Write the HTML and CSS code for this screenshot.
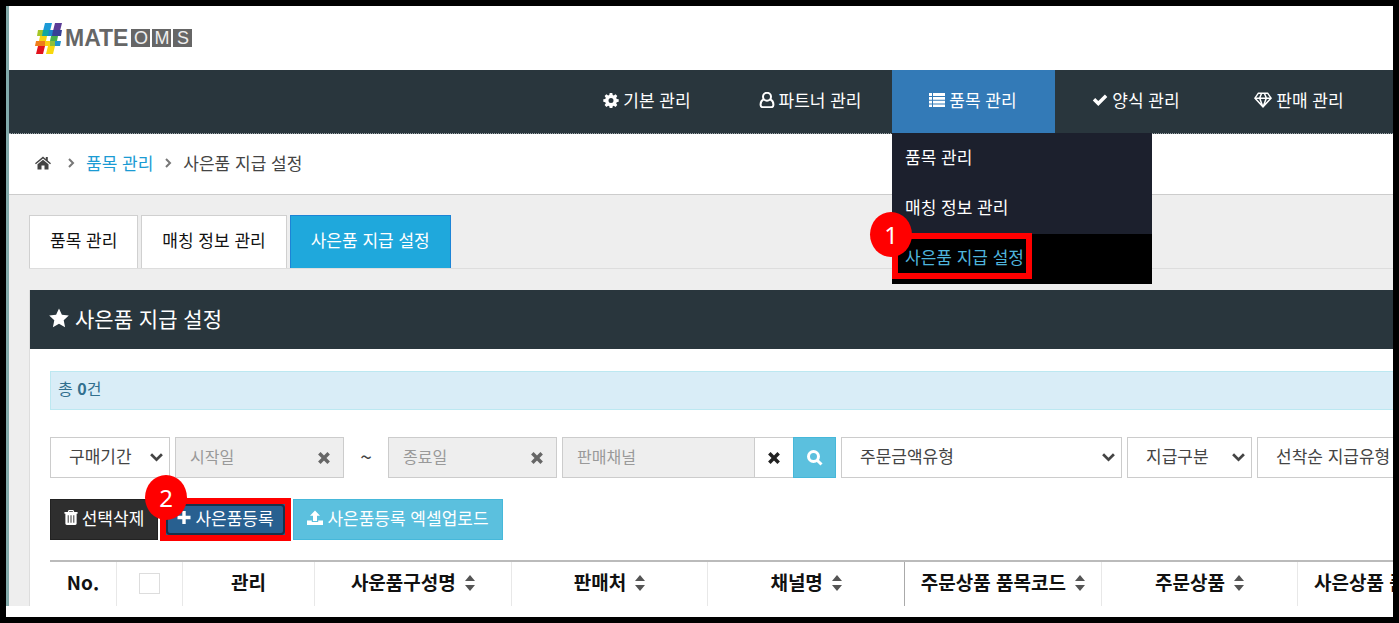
FILE: index.html
```html
<!DOCTYPE html>
<html lang="ko">
<head>
    <meta charset="UTF-8">
    <meta name="viewport" content="width=device-width, initial-scale=1.0">
    <title>사은품 지급 설정</title>
    <link rel="stylesheet" href="styles.css">
</head>
<body>
    <div class="app">
        <header class="header">
            <a class="logo" href="#">
                <svg class="logo-mark" viewBox="0 0 27 31" aria-hidden="true">
                    <path fill="#1c9ad6" d="M10 0h7l-2 8H8z"/>
                    <path fill="#5b3c96" d="M20 0h7l-2 8h-7z"/>
                    <path fill="#a5c626" d="M3 7h6l-1 6H2z"/>
                    <path fill="#12a7a0" d="M8 7h7l-1 6H7z"/>
                    <path fill="#1c84cc" d="M14 7h5l-1 6h-5z"/>
                    <path fill="#363f96" d="M18 7h9l-1 6h-9z"/>
                    <path fill="#f6d411" d="M5 13h7l-1 5H4z"/>
                    <path fill="#49b04b" d="M16 13h7l-1 5h-7z"/>
                    <path fill="#ef7d1a" d="M1 18h10l-1 5H0z"/>
                    <path fill="#f9cf13" d="M10 18h6l-1 5h-5z"/>
                    <path fill="#8dbf3a" d="M15 18h6l-1 5h-5z"/>
                    <path fill="#1d94cf" d="M20 18h6l-1 5h-5z"/>
                    <path fill="#e2121c" d="M3 23h7l-2 8H1z"/>
                    <path fill="#f8d80d" d="M13 23h7l-2 8h-7z"/>
                </svg>
                <span class="logo-text">MATE</span>
                <span class="logo-boxes"><b>O</b><b>M</b><b>S</b></span>
            </a>
        </header>

        <nav class="nav">
            <ul class="nav-list">
                <li class="nav-item">
                    <a href="#">
                        <svg class="icon" viewBox="0 0 16 16" aria-hidden="true"><path fill-rule="evenodd" d="M6.700 1h2.600l.4 2 1.100.5 1.700-1.200 1.800 1.800-1.100 1.700.5 1.100 2 .4v2.500l-2 .4-.5 1.200 1.100 1.700-1.800 1.800-1.700-1.100-1.100.5-.4 2H6.700l-.4-2-1.200-.5-1.700 1.100-1.800-1.800 1.200-1.700-.5-1.200-2-.4V7.300l2-.4.5-1.100L1.600 4.100l1.800-1.800 1.700 1.200L6.300 3zM8 5.900a2.500 2.500 0 1 0 0 5 2.500 2.500 0 0 0 0-5z"/></svg>
                        기본 관리
                    </a>
                </li>
                <li class="nav-item">
                    <a href="#">
                        <svg class="icon line" viewBox="0 0 16 16" aria-hidden="true"><circle cx="8" cy="4.800" r="4"/><path d="M4.700 7.300C2 8.500 1.500 11 1.600 13c.1 1.500 1 2.200 2.300 2.200h8.200c1.300 0 2.200-.7 2.300-2.200.1-2-.4-4.500-3.100-5.700"/></svg>
                        파트너 관리
                    </a>
                </li>
                <li class="nav-item active">
                    <a href="#">
                        <svg class="icon" viewBox="0 0 16 16" aria-hidden="true"><path d="M0 1h3v3H0zM4 1h12v3H4zM0 5h3v2.800H0zM4 5h12v2.800H4zM0 8.800h3v2.700H0zM4 8.800h12v2.700H4zM0 12.500h3V15H0zM4 12.500h12V15H4z"/></svg>
                        품목 관리
                    </a>
                    <ul class="dropdown">
                        <li><a href="#">품목 관리</a></li>
                        <li><a href="#">매칭 정보 관리</a></li>
                        <li class="current">
                            <a href="#">사은품 지급 설정</a>
                            <span class="mark"><span class="step">1</span></span>
                        </li>
                    </ul>
                </li>
                <li class="nav-item">
                    <a href="#">
                        <svg class="icon" viewBox="0 0 16 16" aria-hidden="true"><path d="M.8 8.400 3.200 6l3.100 3.100L12.900 2.500l2.400 2.400-9 9z"/></svg>
                        양식 관리
                    </a>
                </li>
                <li class="nav-item">
                    <a href="#">
                        <svg class="icon wide" viewBox="0 0 18 16" aria-hidden="true"><path fill-rule="evenodd" d="M4 .5h10l4 5.700L9 16 0 6.200zM4.600 2 2.200 5.400h2.900L6.500 2zM8.100 2 6.700 5.400h4.600L9.900 2zM11.500 2l1.400 3.400h2.900L13.400 2zM2.700 6.900l4.100 4.400-1.600-4.400zM6.800 6.900 9 13l2.200-6.100zM12.800 6.900l-1.600 4.400 4.100-4.400z"/></svg>
                        판매 관리
                    </a>
                </li>
            </ul>
        </nav>

        <div class="breadcrumb">
            <a class="home" href="#" aria-label="홈">
                <svg class="icon" viewBox="0 0 16 16" aria-hidden="true"><path d="M8 4.700 13.500 9.300V14.500H9.500v-4h-3v4h-4V9.300zM8 1.500l2.800 2.400V2h2v3.600L16 8.300l-.9 1L8 3.400.9 9.300 0 8.300z"/></svg>
            </a>
            <svg class="sep" viewBox="0 0 8 12" aria-hidden="true"><path d="m2 2 4 4-4 4"/></svg>
            <a class="crumb" href="#">품목 관리</a>
            <svg class="sep" viewBox="0 0 8 12" aria-hidden="true"><path d="m2 2 4 4-4 4"/></svg>
            <span>사은품 지급 설정</span>
        </div>

        <main class="content">
            <div class="tabs">
                <a class="tab" href="#">품목 관리</a>
                <a class="tab" href="#">매칭 정보 관리</a>
                <a class="tab active" href="#">사은품 지급 설정</a>
            </div>

            <section class="panel">
                <h1 class="panel-title">
                    <svg class="star" viewBox="0 0 20 20" aria-hidden="true"><path d="m10 .5 2.900 6.300 6.900.8-5.100 4.700 1.400 6.900L10 15.700l-6.100 3.500 1.400-6.900L.2 7.600l6.900-.8z"/></svg>
                    사은품 지급 설정
                </h1>
                <div class="panel-body">
                    <div class="total">총 <b>0</b>건</div>

                    <form class="filters">
                        <select class="field period" aria-label="기간 구분"><option>구매기간</option></select>
                        <div class="date">
                            <input class="field" type="text" placeholder="시작일" aria-label="시작일" readonly>
                            <button class="clear" type="button" aria-label="시작일 지우기"><svg viewBox="0 0 12 12" aria-hidden="true"><path d="m2 2 8 8M10 2l-8 8"/></svg></button>
                        </div>
                        <span class="tilde">~</span>
                        <div class="date">
                            <input class="field" type="text" placeholder="종료일" aria-label="종료일" readonly>
                            <button class="clear" type="button" aria-label="종료일 지우기"><svg viewBox="0 0 12 12" aria-hidden="true"><path d="m2 2 8 8M10 2l-8 8"/></svg></button>
                        </div>
                        <div class="channel">
                            <input class="field" type="text" placeholder="판매채널" aria-label="판매채널" readonly>
                            <button class="reset" type="button" aria-label="판매채널 지우기"><svg viewBox="0 0 12 12" aria-hidden="true"><path d="m2 2 8 8M10 2l-8 8"/></svg></button>
                            <button class="search" type="button" aria-label="검색"><svg viewBox="0 0 16 16" aria-hidden="true"><circle cx="6.500" cy="6.500" r="5"/><path d="m10.200 10.200 4.300 4.300"/></svg></button>
                        </div>
                        <select class="field amount" aria-label="주문금액유형"><option>주문금액유형</option></select>
                        <select class="field kind" aria-label="지급구분"><option>지급구분</option></select>
                        <select class="field order" aria-label="선착순 지급유형"><option>선착순 지급유형</option></select>
                    </form>

                    <div class="actions">
                        <button class="btn dark" type="button">
                            <svg class="icon small" viewBox="0 0 14 16" aria-hidden="true"><path fill-rule="evenodd" d="M4.500 0h5l1 2H14v2h-1v10.500c0 .9-.6 1.500-1.500 1.500h-9C1.600 16 1 15.400 1 14.500V4H0V2h3.500zM5.200 1.200 4.900 2h4.200l-.3-.8zM3.500 5.500v8h1v-8zm3 0v8h1v-8zm3 0v8h1v-8z"/></svg>
                            선택삭제
                        </button>
                        <div class="marked">
                            <button class="btn blue" type="button">
                                <svg class="icon small" viewBox="0 0 14 14" aria-hidden="true"><path d="M5.300.5h3.400v4.800h4.800v3.400H8.700v4.800H5.300V8.700H.5V5.300h4.800z"/></svg>
                                사은품등록
                            </button>
                            <span class="mark"><span class="step">2</span></span>
                        </div>
                        <button class="btn sky" type="button">
                            <svg class="icon" viewBox="0 0 16 16" aria-hidden="true"><path d="m8 .5 5 5.300h-3V11H6V5.800H3zM0 10.500h4.800V12h6.400v-1.500H16V15H0z"/></svg>
                            사은품등록 엑셀업로드
                        </button>
                    </div>

                    <table class="list">
                        <colgroup>
                            <col class="c-no"><col class="c-check"><col class="c-manage"><col><col><col><col><col><col>
                        </colgroup>
                        <thead>
                            <tr>
                                <th>No.</th>
                                <th><input class="check" type="checkbox" aria-label="전체 선택"></th>
                                <th>관리</th>
                                <th>사운품구성명<svg class="sort" viewBox="0 0 10 18" aria-hidden="true"><path d="m5 1 5 6H0zM0 11h10l-5 6z"/></svg></th>
                                <th>판매처<svg class="sort" viewBox="0 0 10 18" aria-hidden="true"><path d="m5 1 5 6H0zM0 11h10l-5 6z"/></svg></th>
                                <th class="split">채널명<svg class="sort" viewBox="0 0 10 18" aria-hidden="true"><path d="m5 1 5 6H0zM0 11h10l-5 6z"/></svg></th>
                                <th>주문상품 품목코드<svg class="sort" viewBox="0 0 10 18" aria-hidden="true"><path d="m5 1 5 6H0zM0 11h10l-5 6z"/></svg></th>
                                <th>주문상품<svg class="sort" viewBox="0 0 10 18" aria-hidden="true"><path d="m5 1 5 6H0zM0 11h10l-5 6z"/></svg></th>
                                <th>사은상품 품목코드<svg class="sort" viewBox="0 0 10 18" aria-hidden="true"><path d="m5 1 5 6H0zM0 11h10l-5 6z"/></svg></th>
                            </tr>
                        </thead>
                    </table>
                </div>
            </section>
        </main>
    </div>
</body>
</html>
```
FILE: styles.css
```css
* {
    box-sizing: border-box;
}
body {
    margin: 0;
    height: 100vh;
    padding-bottom: 11px;
    border: 6px solid #000;
    background: #fff;
    font-family: "Noto Sans CJK KR", sans-serif;
    font-size: 17px;
    line-height: 24px;
    color: #444;
    overflow: hidden;
}
a {
    color: inherit;
    text-decoration: none;
}
ul {
    margin: 0;
    padding: 0;
    list-style: none;
}
button, input, select {
    font: inherit;
    border-radius: 0;
}
.app {
    display: flex;
    flex-direction: column;
    height: 100%;
    border-left: 3px solid #82aaaa;
    overflow: hidden;
}
.icon {
    width: 16px;
    height: 16px;
    flex: none;
    fill: currentColor;
}
.icon.small {
    width: 14px;
    height: 15px;
}
.icon.wide {
    width: 18px;
}
.icon.line {
    fill: none;
    stroke: currentColor;
    stroke-width: 2;
}

/* header */
.header {
    flex: none;
    display: flex;
    align-items: center;
    height: 64px;
    padding: 0 26px;
}
.logo {
    display: flex;
    align-items: center;
    gap: 3px;
}
.logo-mark {
    width: 27px;
    height: 31px;
}
.logo-text {
    font: bold 23px/24px "Liberation Sans", sans-serif;
    color: #666;
}
.logo-boxes {
    display: flex;
    gap: 2px;
}
.logo-boxes b {
    width: 19px;
    background: #666;
    color: #eee;
    font: 18px/18px "Liberation Sans", sans-serif;
    text-align: center;
}

/* navigation */
.nav {
    flex: none;
    display: flex;
    justify-content: flex-end;
    padding-right: 12px;
    background: #29363d;
    border-bottom: 1px dotted #9aa2a6;
}
.nav-list {
    display: flex;
}
.nav-item {
    position: relative;
    width: 163px;
    color: #fff;
}
.nav-item > a {
    display: flex;
    align-items: center;
    justify-content: center;
    gap: 4px;
    height: 63px;
    padding: 0 1px 4px 0;
}
.nav-item.active > a {
    background: #337ab7;
}
.dropdown {
    position: absolute;
    z-index: 10;
    top: 100%;
    left: 0;
    width: 260px;
    padding-top: 1px;
    background: #1c202d;
}
.dropdown li {
    position: relative;
}
.dropdown a {
    display: block;
    padding: 11px 13px 15px;
}
.dropdown .current {
    background: #000;
    color: #4fb4dc;
}

/* numbered red callouts */
.mark {
    position: absolute;
    border: 6px solid #f00;
    pointer-events: none;
}
.current .mark {
    inset: -1px auto 5px 0;
    width: 140px;
}
.step {
    position: absolute;
    left: -28px;
    top: -27px;
    width: 42px;
    height: 45px;
    border-radius: 50%;
    background: #f00;
    color: #fff;
    font: 24px/45px "Noto Sans", sans-serif;
    text-align: center;
}

/* breadcrumb */
.breadcrumb {
    flex: none;
    display: flex;
    align-items: center;
    gap: 11px;
    height: 61px;
    padding: 0 26px 3px;
    border-bottom: 1px solid #ccc;
}
.home {
    display: flex;
    margin-right: 5px;
}
.crumb {
    color: #1b9bd3;
}
.sep {
    width: 8px;
    height: 12px;
    fill: none;
    stroke: #777;
    stroke-width: 2;
}

/* content */
.content {
    flex: 1;
    padding: 20px 0 0 20px;
    background: #eee;
    overflow: hidden;
}
.tabs {
    display: flex;
    gap: 3px;
    border-bottom: 1px solid #ddd;
}
.tab {
    padding: 12px 20px 16px;
    border: 1px solid #d0d0d0;
    border-bottom: 0;
    background: #fff;
    color: #111;
}
.tab.active {
    background: #1fa8dc;
    border-color: #1c84d6;
    color: #fff;
}
.panel {
    margin-top: 21px;
    border-left: 1px solid #ddd;
    background: #fff;
}
.panel-title {
    display: flex;
    align-items: center;
    gap: 6px;
    height: 59px;
    margin: 0;
    padding: 0 19px 4px;
    background: #29363d;
    color: #fff;
    font-size: 21px;
    font-weight: 400;
}
.star {
    width: 20px;
    height: 20px;
    fill: currentColor;
}
.panel-body {
    padding: 22px 0 0 20px;
}
.total {
    padding: 4px 7px 9px;
    border: 1px solid #bce8f1;
    border-right: 0;
    background: #d9edf7;
    color: #31708f;
    font-size: 16px;
}

/* filters */
.filters {
    display: flex;
    gap: 5px;
    margin-top: 27px;
}
.field {
    height: 41px;
    padding: 0 18px 3px;
    border: 1px solid #ccc;
    background: #fff;
    color: #444;
    font-size: 17px;
}
select.field {
    flex: none;
    appearance: none;
    background: #fff url("data:image/svg+xml,%3Csvg xmlns='http://www.w3.org/2000/svg' viewBox='0 0 12 8'%3E%3Cpath d='m1 1 5 5 5-5' fill='none' stroke='%23444' stroke-width='2.500'/%3E%3C/svg%3E") no-repeat right 6px center / 13px 9px;
}
input.field {
    width: 100%;
    padding: 0 14px 3px;
    background: #eee;
    font-size: 16px;
}
input.field::placeholder {
    color: #999;
    opacity: 1;
}
.period {
    width: 120px;
}
.amount {
    width: 281px;
}
.kind {
    width: 125px;
}
.order {
    width: 190px;
}
.date {
    position: relative;
    flex: none;
    width: 169px;
}
.clear {
    position: absolute;
    top: 0;
    right: 0;
    width: 40px;
    height: 41px;
    padding: 0 0 3px;
    border: 0;
    background: none;
}
.clear svg, .reset svg {
    width: 14px;
    height: 14px;
    vertical-align: middle;
    stroke: #666;
    stroke-width: 3;
}
.tilde {
    flex: none;
    width: 34px;
    padding-top: 7px;
    font-size: 21px;
    text-align: center;
}
.channel {
    display: flex;
    flex: none;
    width: 274px;
}
.channel .field {
    flex: 1;
    min-width: 0;
}
.reset {
    width: 38px;
    padding: 0 0 3px;
    border: 1px solid #ccc;
    border-width: 1px 0;
    background: #fff;
}
.reset svg {
    stroke: #222;
}
.search {
    width: 43px;
    padding: 0 0 3px;
    border: 1px solid #46b8da;
    background: #5bc0de;
}
.search svg {
    width: 16px;
    height: 16px;
    vertical-align: middle;
    fill: none;
    stroke: #fff;
    stroke-width: 3;
}

/* buttons */
.actions {
    display: flex;
    gap: 2px;
    margin-top: 21px;
}
.btn {
    display: flex;
    align-items: center;
    justify-content: center;
    gap: 4px;
    height: 41px;
    padding: 0 13px 4px;
    border: 1px solid transparent;
    color: #fff;
    white-space: nowrap;
}
.dark {
    width: 108px;
    background: #2e2e2e;
    border-color: #222;
}
.marked {
    position: relative;
    width: 131px;
}
.blue {
    width: 100%;
    background: #286090;
}
.marked .mark {
    inset: -1px 0;
}
.marked .mark::before {
    content: "";
    position: absolute;
    inset: 0;
    border: 2px solid #17324a;
    border-radius: 4px;
}
.marked .step {
    left: -21px;
    top: -29px;
}
.sky {
    width: 210px;
    background: #5bc0de;
    border-color: #46b8da;
}

/* table */
.list {
    width: 1445px;
    margin-top: 20px;
    table-layout: fixed;
    border-collapse: separate;
    border-spacing: 0;
    border-top: 2px solid #bbb;
}
.c-no {
    width: 67px;
}
.c-check {
    width: 66px;
}
.c-manage {
    width: 132px;
}
.list th {
    height: 48px;
    padding: 0 0 9px;
    border-right: 1px solid #e8e8e8;
    color: #111;
    font-size: 19px;
    font-weight: 700;
    white-space: nowrap;
}
.list .split {
    border-right-color: #aaa;
}
.check {
    appearance: none;
    width: 21px;
    height: 21px;
    margin: 0;
    border: 1px solid #ddd;
    background: #fff;
    vertical-align: middle;
}
.sort {
    width: 10px;
    height: 18px;
    margin-left: 9px;
    vertical-align: -2px;
    fill: #555;
}
```
